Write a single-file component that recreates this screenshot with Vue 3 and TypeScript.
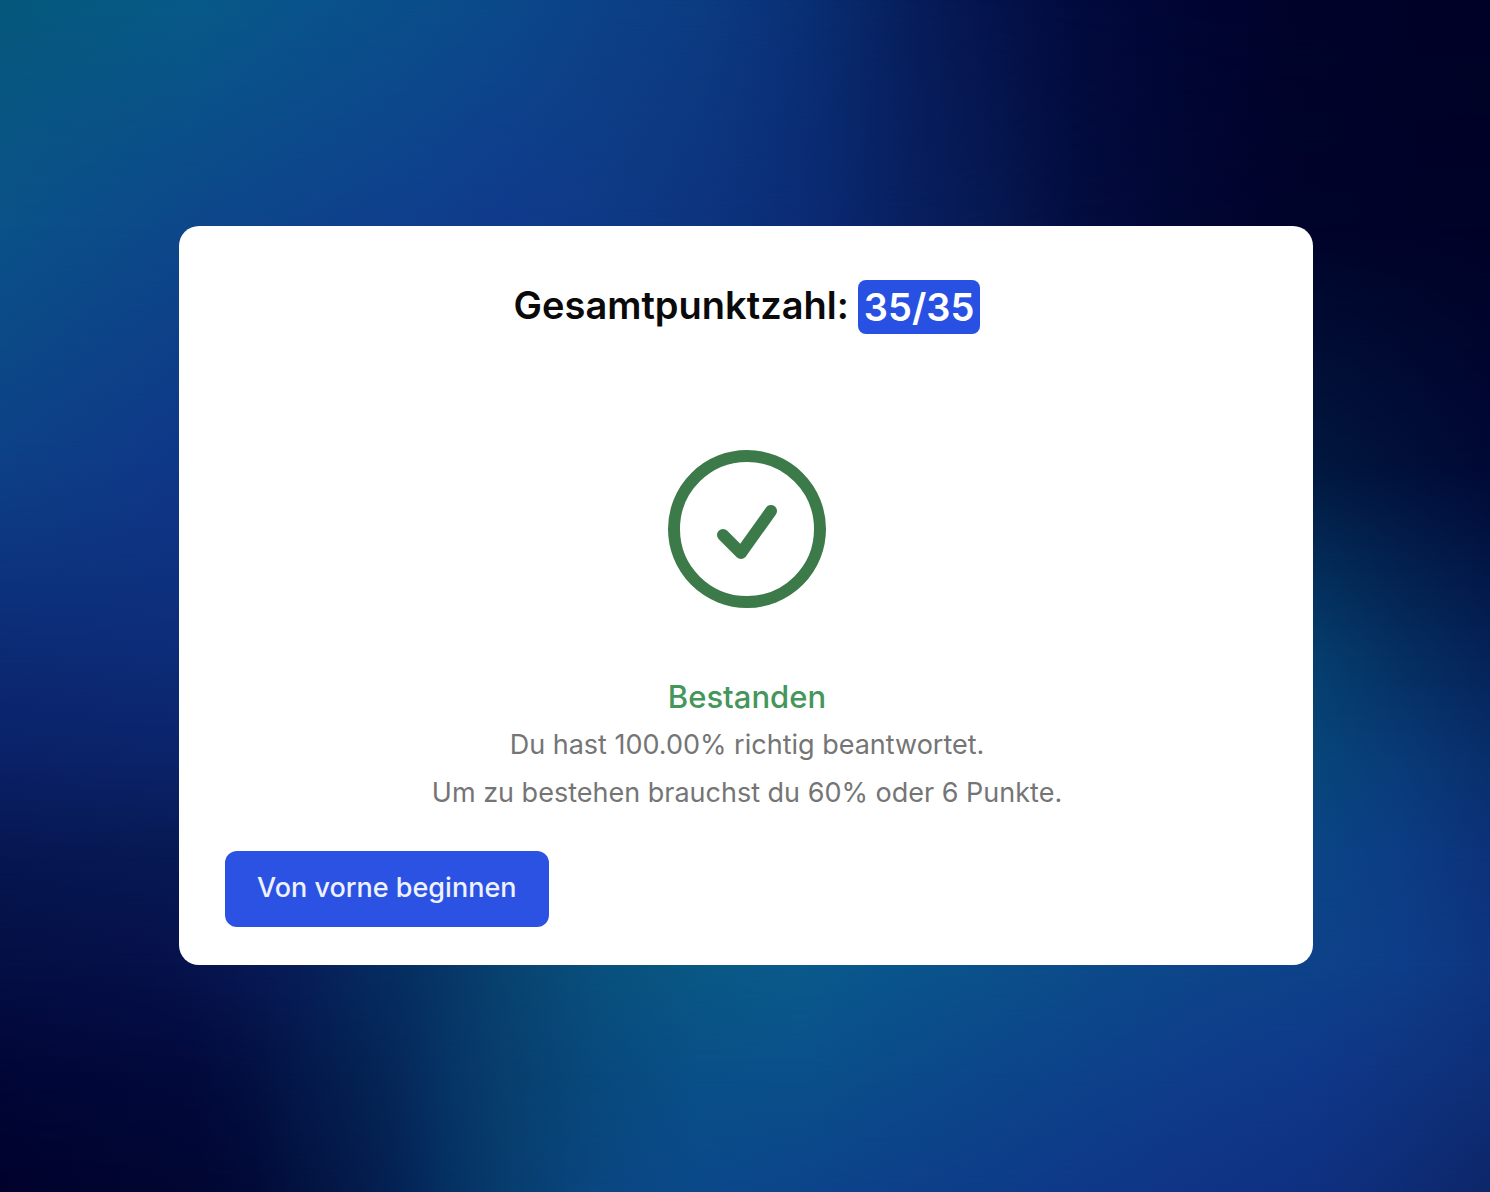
<script setup lang="ts">
type Stop = [at: number, colour: string]

interface Band {
  y: number
  stops: Stop[]
}

interface Result {
  score: number
  total: number
  percent: string
  requiredPercent: number
  requiredPoints: number
}

const result: Result = {
  score: 35,
  total: 35,
  percent: '100.00',
  requiredPercent: 60,
  requiredPoints: 6,
}

// Horizontal colour bands; each one fades in over the band above it.
const bands: Band[] = [
  { y: 0, stops: [[0, '#06587c'], [7, '#065a82'], [13, '#075a88'], [20, '#09548b'], [27, '#0a4f8b'], [34, '#0b498a'], [40, '#0c4287'], [47, '#0c3c82'], [52, '#0a337a'], [57, '#08296a'], [61, '#071e5c'], [66, '#05144e'], [72, '#020b3e'], [80, '#010533'], [87, '#00032a'], [100, '#000226']] },
  { y: 19, stops: [[0, '#0a5288'], [13, '#0d478a'], [27, '#0f3f8c'], [34, '#103a8c'], [40, '#0f3986'], [47, '#0d347e'], [54, '#0b2b75'], [60, '#082162'], [67, '#061850'], [72, '#030d40'], [80, '#010632'], [88, '#00032a'], [100, '#000227']] },
  { y: 39, stops: [[0, '#0d4086'], [12, '#0f3787'], [88, '#01183f'], [100, '#000835']] },
  { y: 47, stops: [[0, '#0d357f'], [12, '#0e3280'], [88, '#032c58'], [94, '#03204e'], [100, '#021645']] },
  { y: 55, stops: [[0, '#0c2a74'], [12, '#0d2c78'], [88, '#053e6e'], [94, '#052f60'], [100, '#052258']] },
  { y: 64, stops: [[0, '#0a2166'], [12, '#0b2368'], [88, '#07467a'], [94, '#093b78'], [100, '#092f6c']] },
  { y: 72, stops: [[0, '#061650'], [12, '#071953'], [88, '#0b4586'], [94, '#0c3d85'], [100, '#0c327a']] },
  { y: 81, stops: [[0, '#040f44'], [10, '#061049'], [15, '#071550'], [20, '#071d58'], [24, '#06285e'], [28, '#063163'], [34, '#084370'], [40, '#09507d'], [47, '#095884'], [54, '#0a5a8c'], [60, '#09558c'], [67, '#0b508b'], [74, '#0c4a8a'], [81, '#0d458a'], [88, '#0d4289'], [94, '#0e3d88'], [100, '#0e3580']] },
  { y: 90, stops: [[0, '#010637'], [13, '#020a3c'], [17, '#031042'], [20, '#04184a'], [24, '#042152'], [27, '#06295a'], [30, '#063466'], [34, '#083f6e'], [40, '#08497c'], [47, '#095088'], [54, '#0a508a'], [60, '#0b4b8a'], [67, '#0c468a'], [74, '#0d418a'], [81, '#0f3c8a'], [88, '#0f388a'], [94, '#0f3480'], [100, '#0e2f78']] },
  { y: 100, stops: [[0, '#00022b'], [13, '#010632'], [17, '#010a37'], [20, '#021240'], [24, '#041b4a'], [27, '#042356'], [30, '#053062'], [34, '#073d6e'], [40, '#0a4680'], [47, '#0b488a'], [54, '#0c448a'], [60, '#0d4089'], [67, '#0d3c88'], [74, '#0f3788'], [81, '#103385'], [88, '#0f3080'], [94, '#0e2c76'], [100, '#0d2668']] },
]

function bandStyle(index: number): Record<string, string> {
  const band = bands[index]
  const colours = band.stops.map(([at, colour]) => `${colour} ${at}%`).join(', ')
  const style: Record<string, string> = { background: `linear-gradient(to right, ${colours})` }
  if (index > 0) {
    style.maskImage = `linear-gradient(to bottom, transparent ${bands[index - 1].y}%, #000 ${band.y}%)`
  }
  return style
}

function restart(): void {
  window.location.reload()
}
</script>

<template>
  <main class="page">
    <div class="backdrop" aria-hidden="true">
      <div v-for="(band, index) in bands" :key="band.y" class="band" :style="bandStyle(index)"></div>
    </div>

    <section class="card">
      <h1 class="heading">
        <span>Gesamtpunktzahl:</span>
        <span class="score">{{ result.score }}/{{ result.total }}</span>
      </h1>

      <svg class="check" viewBox="0 0 158 158" fill="none" aria-hidden="true">
        <circle cx="79" cy="79" r="73" />
        <path d="M55 85 73 103 103 61" />
      </svg>

      <div class="summary">
        <h2 class="status">Bestanden</h2>
        <p>Du hast {{ result.percent }}% richtig beantwortet.</p>
        <p>Um zu bestehen brauchst du {{ result.requiredPercent }}% oder {{ result.requiredPoints }} Punkte.</p>
      </div>

      <button class="restart" type="button" @click="restart">Von vorne beginnen</button>
    </section>
  </main>
</template>

<style>
body {
  margin: 0;
  background: #000226;
}
</style>

<style scoped>
.page {
  position: relative;
  display: flex;
  align-items: center;
  box-sizing: border-box;
  min-height: 100vh;
  padding: 40px 177px 42px 179px;
  font-family: Inter, "Liberation Sans", sans-serif;
}

.backdrop,
.band {
  position: absolute;
  inset: 0;
}

.card {
  position: relative;
  display: flex;
  flex: 1;
  flex-direction: column;
  align-items: center;
  padding: 54px 44px 38px 46px;
  border-radius: 20px;
  background: #fff;
}

.heading {
  display: flex;
  flex-wrap: wrap;
  justify-content: center;
  gap: 9px;
  margin: 0;
  color: #0a0a0a;
  font-size: 38px;
  font-weight: 600;
  line-height: 50px;
}

.score {
  padding: 2px 6px;
  border-radius: 8px;
  background: #2850e2;
  color: #fff;
}

.check {
  width: 158px;
  height: 158px;
  margin: 116px 0 65px;
  stroke: #3d7a4a;
  stroke-width: 12;
  stroke-linecap: round;
  stroke-linejoin: round;
}

.summary {
  color: #757575;
  font-size: 27px;
  line-height: 48px;
  text-align: center;
}

.summary p {
  margin: 0;
}

.status {
  margin: 0;
  color: #45965a;
  font-size: 31px;
  font-weight: 500;
}

.restart {
  align-self: flex-start;
  margin-top: 34px;
  padding: 20px 32px 22px;
  border: 0;
  border-radius: 12px;
  background: #2b52e3;
  color: #eef2ff;
  font-family: inherit;
  font-size: 27px;
  font-weight: 500;
  line-height: 34px;
  cursor: pointer;
}
</style>
